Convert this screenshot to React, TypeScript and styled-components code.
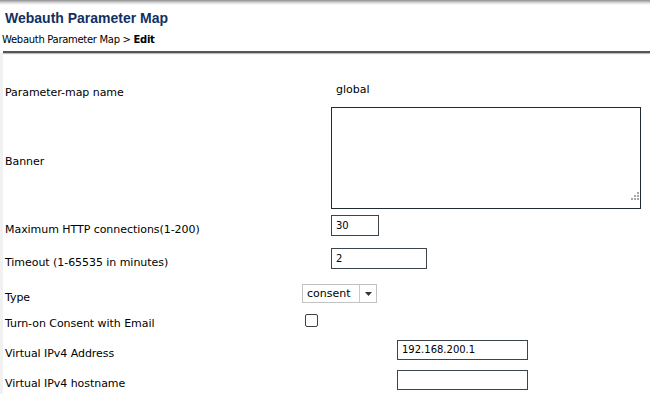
import React from 'react';
import styled, { createGlobalStyle } from 'styled-components';

const GlobalStyle = createGlobalStyle`
  html, body {
    margin: 0;
    padding: 0;
    background: #ffffff;
  }
  body {
    font-family: 'DejaVu Sans', Verdana, sans-serif;
    color: #000000;
  }
`;

const Page = styled.div`
  width: 650px;
  height: 397px;
  overflow: hidden;
  background: #ffffff;
`;

const TopShade = styled.div`
  height: 5px;
  background: linear-gradient(#8e8e8e, #c8c8c8 40%, #f2f2f2 80%, #ffffff);
`;

const Header = styled.div`
  padding: 5px 0 0 0;
`;

const Title = styled.h1`
  margin: 0 0 0 5px;
  font-family: 'Liberation Sans', Arial, sans-serif;
  font-size: 14px;
  line-height: 16px;
  font-weight: bold;
  color: #12305f;
`;

const Breadcrumb = styled.div`
  margin: 8px 0 0 2px;
  font-size: 10px;
  line-height: 12px;
  letter-spacing: -0.3px;
  color: #000000;
  b {
    font-weight: bold;
  }
`;

const Rule = styled.div`
  margin: 5px 0 0 3px;
  height: 2px;
  background: #555555;
  box-shadow: 0 1px 1px #b5b5b5;
`;

const Form = styled.div`
  padding-top: 23px;
  display: grid;
  grid-template-columns: 299px 1fr;
  grid-template-rows: 26px 112px 23px 43px 27px 26px 33px 28px;
  border-left: 3px solid #f1f1f1;
`;

const Label = styled.div`
  display: flex;
  align-items: center;
  padding: 7px 0 0 2px;
  font-size: 11px;
  line-height: 13px;
  letter-spacing: -0.05px;
  color: #000000;
`;

const Value = styled.div<{ $indent: number }>`
  position: relative;
  display: flex;
  align-items: center;
  padding-left: ${(p) => p.$indent}px;
  font-size: 11px;
`;

const StaticText = styled.span`
  font-size: 11px;
  line-height: 13px;
`;

const TextBox = styled.input<{ $w: number; $h?: number }>`
  box-sizing: border-box;
  width: ${(p) => p.$w}px;
  height: ${(p) => p.$h ?? 21}px;
  margin: 0;
  padding: 0 0 0 4px;
  border: 1px solid #3b454c;
  border-radius: 0;
  background: #ffffff;
  font-family: 'DejaVu Sans', Verdana, sans-serif;
  font-size: 10px;
  color: #000000;
  outline: none;
`;

const BannerArea = styled.textarea`
  box-sizing: border-box;
  width: 310px;
  height: 102px;
  margin: 0;
  padding: 2px;
  border: 1px solid #1f2a31;
  border-radius: 0;
  resize: none;
  font-family: 'DejaVu Sans', Verdana, sans-serif;
  font-size: 10px;
  outline: none;
`;

const Grip = styled.svg`
  position: absolute;
  right: 11px;
  bottom: 14px;
`;

const SelectBox = styled.div`
  box-sizing: border-box;
  display: flex;
  width: 75px;
  height: 19px;
  border: 1px solid #c2c2c2;
  background: #ffffff;
`;

const SelectText = styled.span`
  display: flex;
  align-items: center;
  width: 57px;
  padding-left: 4px;
  box-sizing: border-box;
  border-right: 1px solid #c8c8c8;
  font-size: 11px;
  line-height: 13px;
`;

const SelectArrow = styled.span`
  flex: 1;
  display: flex;
  align-items: center;
  justify-content: center;
`;

const Check = styled.input`
  appearance: none;
  box-sizing: border-box;
  width: 13px;
  height: 13px;
  margin: 0;
  border: 1px solid #404040;
  border-radius: 2px;
  background: #ffffff;
`;

export default function App() {
  return (
    <Page>
      <GlobalStyle />
      <TopShade />
      <Header>
        <Title>Webauth Parameter Map</Title>
        <Breadcrumb>
          Webauth Parameter Map &gt; <b>Edit</b>
        </Breadcrumb>
        <Rule />
      </Header>
      <Form>
        <Label>Parameter-map name</Label>
        <Value $indent={34}>
          <StaticText>global</StaticText>
        </Value>

        <Label>Banner</Label>
        <Value $indent={29}>
          <BannerArea />
          <Grip width="8" height="8" viewBox="0 0 8 8">
            <g fill="#a8a8a8">
              <rect x="6" y="0" width="2" height="2" />
              <rect x="3" y="3" width="2" height="2" />
              <rect x="6" y="3" width="2" height="2" />
              <rect x="0" y="6" width="2" height="2" />
              <rect x="3" y="6" width="2" height="2" />
              <rect x="6" y="6" width="2" height="2" />
            </g>
          </Grip>
        </Value>

        <Label>Maximum HTTP connections(1-200)</Label>
        <Value $indent={29}>
          <TextBox $w={48} defaultValue="30" />
        </Value>

        <Label>Timeout (1-65535 in minutes)</Label>
        <Value $indent={29}>
          <TextBox $w={96} defaultValue="2" />
        </Value>

        <Label>Type</Label>
        <Value $indent={0}>
          <SelectBox>
            <SelectText>consent</SelectText>
            <SelectArrow>
              <svg width="7" height="4" viewBox="0 0 7 4">
                <path d="M0 0 H7 L3.5 4 Z" fill="#333333" />
              </svg>
            </SelectArrow>
          </SelectBox>
        </Value>

        <Label>Turn-on Consent with Email</Label>
        <Value $indent={3}>
          <Check type="checkbox" />
        </Value>

        <Label>Virtual IPv4 Address</Label>
        <Value $indent={95}>
          <TextBox $w={131} $h={20} defaultValue="192.168.200.1" />
        </Value>

        <Label>Virtual IPv4 hostname</Label>
        <Value $indent={95}>
          <TextBox $w={131} $h={20} defaultValue="" />
        </Value>
      </Form>
    </Page>
  );
}
